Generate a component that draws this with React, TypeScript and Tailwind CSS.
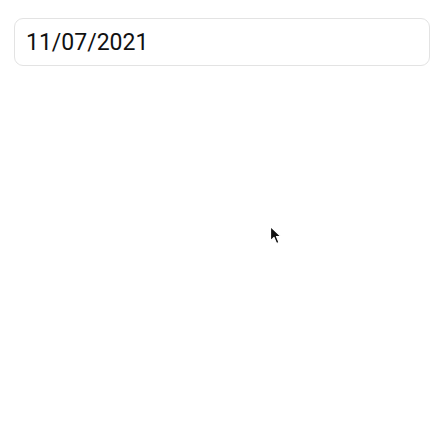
import * as React from "react";

export default function App() {
  const [value, setValue] = React.useState("11/07/2021");

  return (
    <div className="relative h-[442px] w-[444px] bg-white font-['Roboto',sans-serif]">
      <div className="px-[14px] pt-[18px]">
        <input
          value={value}
          onChange={(e) => setValue(e.target.value)}
          className="h-[48px] w-[416px] rounded-[9px] border border-[#e3e3e3] bg-white
                     pl-[11px] pt-[1px] text-[23px] text-[#111] outline-none"
        />
      </div>

      {/* mouse pointer */}
      <svg
        className="absolute left-[269px] top-[225px]"
        width="14"
        height="21"
        viewBox="0 0 14 21"
      >
        <path
          d="M1.5 1.5 L1.5 16 L5 12.5 L7.5 18.5 L10 17.5 L7.5 11.5 L12 11.5 Z"
          fill="#111"
          stroke="#fff"
          strokeWidth="1.2"
          strokeLinejoin="round"
        />
      </svg>
    </div>
  );
}
